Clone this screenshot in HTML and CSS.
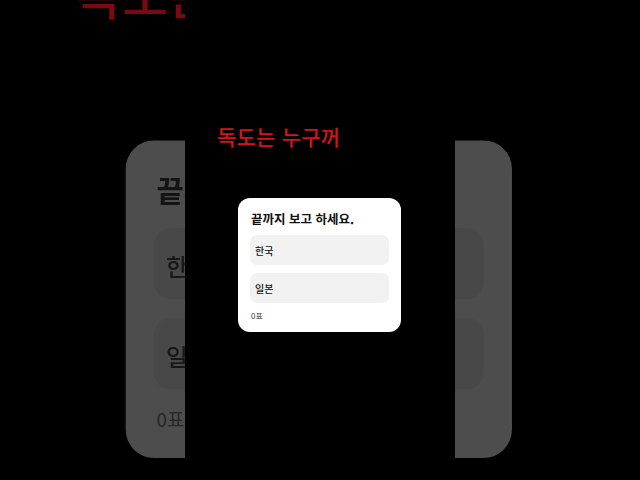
FILE: index.html
```html
<!DOCTYPE html>
<html lang="ko">
<head>
<meta charset="utf-8">
<title>끝까지 보고 하세요.</title>
<link rel="stylesheet" href="styles.css">
</head>
<body>
<div class="stage">
  <div class="scene scene-bg" aria-hidden="true">
    <div class="column">
      <p class="caption">독도는 누구꺼</p>
      <div class="card">
        <h2 class="card-title">끝까지 보고 하세요.</h2>
        <div class="options">
          <div class="option">한국</div>
          <div class="option">일본</div>
        </div>
        <div class="votes">0표</div>
      </div>
    </div>
  </div>
  <div class="scene scene-fg">
    <div class="column">
      <p class="caption">독도는 누구꺼</p>
      <div class="card">
        <h2 class="card-title">끝까지 보고 하세요.</h2>
        <div class="options">
          <div class="option">한국</div>
          <div class="option">일본</div>
        </div>
        <div class="votes">0표</div>
      </div>
    </div>
  </div>
</div>
</body>
</html>
```
FILE: styles.css
```css
html, body {
  margin: 0;
  padding: 0;
  background: #000;
}

body {
  font-family: "Noto Sans CJK KR", "Noto Sans", sans-serif;
}

.stage {
  position: relative;
  width: 640px;
  height: 480px;
  overflow: hidden;
  background: #000;
}

.scene {
  position: absolute;
  inset: 0;
  display: flex;
  justify-content: center;
}

.column {
  width: 270px;
  height: 480px;
  box-sizing: border-box;
  padding-top: 124px;
  display: flex;
  flex-direction: column;
}

.scene-fg .column {
  background: #000;
}

.caption {
  margin: 0 0 50px 32px;
  font-size: 21px;
  line-height: 24px;
  font-weight: 500;
  letter-spacing: 0.2px;
  color: #d3141c;
  white-space: nowrap;
}

.card {
  align-self: center;
  width: 163px;
  height: 134px;
  margin-right: 1px;
  box-sizing: border-box;
  padding: 12px 12px 0;
  background: #fff;
  border-radius: 12px;
}

.card-title {
  margin: 0 0 7px 1px;
  font-size: 12.5px;
  line-height: 18px;
  font-weight: 700;
  color: #111;
  white-space: nowrap;
}

.options {
  display: flex;
  flex-direction: column;
  gap: 8px;
}

.option {
  height: 30px;
  display: flex;
  align-items: center;
  padding-left: 5px;
  background: #f2f2f2;
  border-radius: 7px;
  font-size: 10px;
  font-weight: 500;
  color: #111;
}

.votes {
  margin: 8px 0 0 1px;
  font-size: 8px;
  line-height: 10px;
  color: #3a3a3a;
}

/* dimmed, enlarged copy behind the video frame */
.scene-bg {
  transform: scale(2.37);
  transform-origin: 320px 240px;
  filter: blur(0.3px);
}

.scene-bg .caption {
  color: #7a0a12;
}

.scene-bg .card {
  background: #4d4d4d;
}

.scene-bg .card-title {
  color: #141414;
}

.scene-bg .option {
  background: #484848;
  color: #181818;
}

.scene-bg .votes {
  color: #262626;
}
```
